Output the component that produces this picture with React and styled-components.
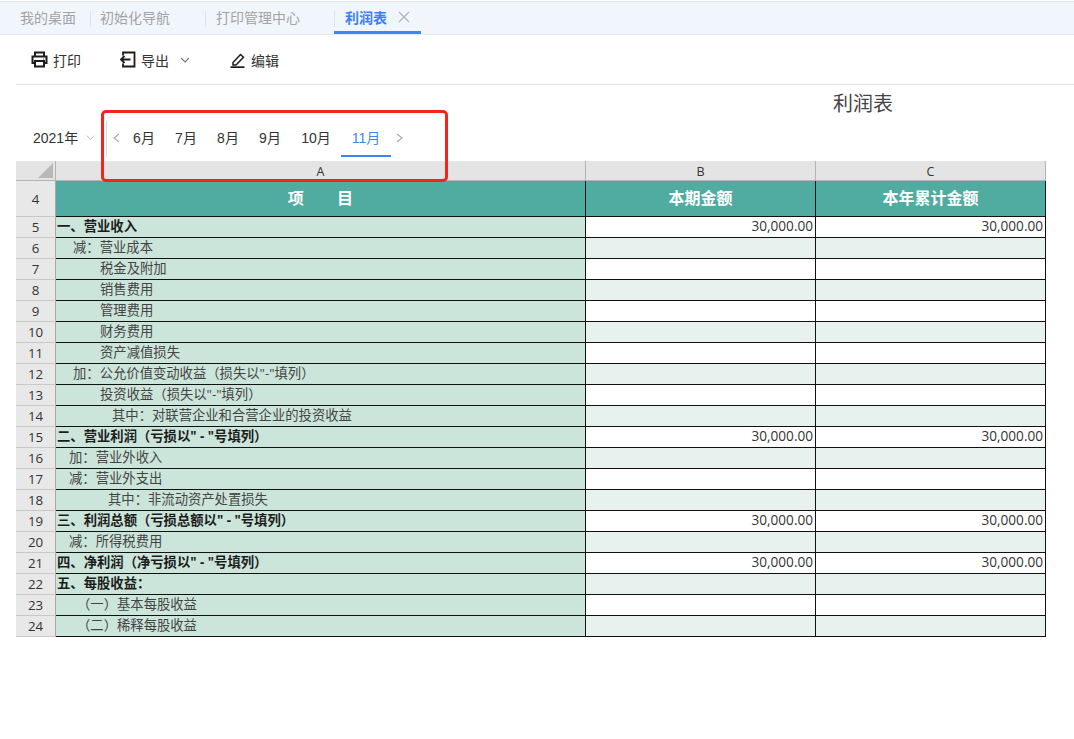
import React from 'react';
import styled, { createGlobalStyle } from 'styled-components';

const GlobalStyle = createGlobalStyle`
  html, body { margin: 0; padding: 0; background: #fff; }
  body { font-family: "Liberation Sans", "Noto Sans CJK SC", sans-serif; color: #333; }
`;

const Page = styled.div`
  position: relative;
  width: 1074px;
  height: 739px;
  overflow: hidden;
`;

const TabBar = styled.div`
  display: flex;
  align-items: stretch;
  height: 32px;
  margin-top: 1px;
  padding-left: 9px;
  background: #f1f6fd;
  border-top: 1px solid #e4e4e4;
  border-bottom: 1px solid #e3e8ef;
`;

const Tab = styled.div`
  position: relative;
  display: flex;
  align-items: center;
  gap: 11px;
  width: ${p => p.$w}px;
  padding-left: ${p => p.$pad}px;
  padding-top: 1px;
  box-sizing: border-box;
  font-size: 14px;
  font-weight: ${p => (p.$active ? 700 : 400)};
  color: ${p => (p.$active ? '#3d7ef5' : '#a3a3a3')};
  border-bottom: 3px solid ${p => (p.$active ? '#3f85f5' : 'transparent')};
  &::before {
    content: '';
    display: ${p => (p.$first ? 'none' : 'block')};
    position: absolute;
    left: 0;
    top: 9px;
    height: 16px;
    border-left: 1px solid #e0e3e8;
  }
`;

const Toolbar = styled.div`
  display: flex;
  align-items: center;
  height: 49px;
  margin-left: 16px;
  padding-left: 15px;
  border-bottom: 1px solid #e2e2e2;
`;

const ToolButton = styled.div`
  display: flex;
  align-items: center;
  gap: 5px;
  margin-right: ${p => p.$gap}px;
  font-size: 14px;
  color: #333;
`;

const ToolCaret = styled.span`
  display: flex;
  margin-left: 6px;
`;

const Title = styled.div`
  height: 36px;
  padding-left: 833px;
  font-size: 20px;
  line-height: 38px;
  color: #444;
`;

const FilterRow = styled.div`
  display: flex;
  align-items: stretch;
  height: 40px;
  padding-left: 33px;
`;

const Year = styled.div`
  display: flex;
  align-items: center;
  gap: 8px;
  width: 73px;
  height: 32px;
  font-size: 14px;
  color: #333;
`;

const Months = styled.div`
  display: flex;
  align-items: flex-start;
  height: 36px;
  border-left: 1px solid #d9d9d9;
  padding-left: 6px;
`;

const Month = styled.div`
  height: 36px;
  line-height: 34px;
  box-sizing: border-box;
  width: ${p => p.$w}px;
  text-align: center;
  font-size: 14px;
  color: ${p => (p.$active ? '#3f85f5' : '#333')};
  border-bottom: 2px solid ${p => (p.$active ? '#3f85f5' : 'transparent')};
`;

const Arrow = styled.div`
  display: flex;
  align-items: center;
  height: 34px;
  width: ${p => p.$w}px;
  padding-left: ${p => p.$pad}px;
  box-sizing: border-box;
`;

const Sheet = styled.div`
  display: grid;
  grid-template-columns: 40px 530px 230px 230px;
  grid-template-rows: 20px 36px repeat(20, 21px);
  margin-left: 16px;
  width: 1030px;
  font-family: "Open Sans", "Noto Sans CJK SC", sans-serif;
`;

const Corner = styled.div`
  position: relative;
  background: #e4e4e4;
  border-right: 1px solid #b4b4b4;
  border-bottom: 1px solid #b4b4b4;
  box-sizing: border-box;
  &::after {
    content: '';
    position: absolute;
    right: 2px;
    bottom: 2px;
    width: 0;
    height: 0;
    border-left: 15px solid transparent;
    border-bottom: 15px solid #b8b8b8;
  }
`;

const ColHead = styled.div`
  line-height: 21px;
  text-align: center;
  background: #e4e4e4;
  border-right: 1px solid #b4b4b4;
  border-bottom: 1px solid #b4b4b4;
  box-sizing: border-box;
  color: #333;
  font-size: 12.5px;
`;

const RowHead = styled.div`
  line-height: ${p => (p.$tall ? 36 : 21)}px;
  text-align: center;
  background: #e8e8e8;
  border-right: 1px solid #a9a9a9;
  border-bottom: 1px solid #c8c8c8;
  box-sizing: border-box;
  color: #333;
  font-size: 13.3px;
`;

const HeadCell = styled.div`
  line-height: 35px;
  text-align: center;
  background: #50aba0;
  color: #fff;
  font-size: 16px;
  font-weight: 700;
  white-space: pre;
  border-right: 1px solid #111;
  border-bottom: 1px solid #111;
  box-sizing: border-box;
`;

const LabelCell = styled.div`
  line-height: 18px;
  padding-left: ${p => p.$indent}px;
  background: #cce5da;
  border-right: 1px solid #111;
  border-bottom: 1px solid #111;
  box-sizing: border-box;
  font-size: 13.33px;
  font-weight: ${p => (p.$bold ? 700 : 400)};
  color: ${p => (p.$bold ? '#1c1c1c' : '#444')};
  white-space: pre;
  overflow: hidden;
`;

const ValueCell = styled.div`
  line-height: 18px;
  padding-right: 2px;
  text-align: right;
  background: ${p => (p.$shaded ? '#e7f1ee' : '#fff')};
  border-right: 1px solid #111;
  border-bottom: 1px solid #111;
  box-sizing: border-box;
  font-size: 13.6px;
  color: #333;
`;

const Highlight = styled.div`
  position: absolute;
  left: 101px;
  top: 110px;
  width: 347px;
  height: 72px;
  box-sizing: border-box;
  border: 3px solid #f5231b;
  border-radius: 5px;
  pointer-events: none;
`;

const Row = ({ no, label, indent, bold, value }) => (
  <>
    <RowHead>{no}</RowHead>
    <LabelCell $indent={indent} $bold={bold}>{label}</LabelCell>
    <ValueCell $shaded={no % 2 === 0}>{value}</ValueCell>
    <ValueCell $shaded={no % 2 === 0}>{value}</ValueCell>
  </>
);

const amount = '30,000.00';

const rows = [
  { no: 5, label: '一、营业收入', indent: 1, bold: true, value: amount },
  { no: 6, label: '减：营业成本', indent: 17 },
  { no: 7, label: '税金及附加', indent: 44 },
  { no: 8, label: '销售费用', indent: 44 },
  { no: 9, label: '管理费用', indent: 44 },
  { no: 10, label: '财务费用', indent: 44 },
  { no: 11, label: '资产减值损失', indent: 44 },
  { no: 12, label: '加：公允价值变动收益（损失以"-"填列）', indent: 17 },
  { no: 13, label: '投资收益（损失以"-"填列）', indent: 44 },
  { no: 14, label: '其中：对联营企业和合营企业的投资收益', indent: 56 },
  { no: 15, label: '二、营业利润（亏损以" - "号填列）', indent: 1, bold: true, value: amount },
  { no: 16, label: '加：营业外收入', indent: 13 },
  { no: 17, label: '减：营业外支出', indent: 13 },
  { no: 18, label: '其中：非流动资产处置损失', indent: 52 },
  { no: 19, label: '三、利润总额（亏损总额以" - "号填列）', indent: 1, bold: true, value: amount },
  { no: 20, label: '减：所得税费用', indent: 13 },
  { no: 21, label: '四、净利润（净亏损以" - "号填列）', indent: 1, bold: true, value: amount },
  { no: 22, label: '五、每股收益：', indent: 1, bold: true },
  { no: 23, label: '（一）基本每股收益', indent: 21 },
  { no: 24, label: '（二）稀释每股收益', indent: 21 },
];

const PrintIcon = () => (
  <svg width="17" height="17" viewBox="0 0 17 17" fill="none" stroke="#1c1c1c" strokeWidth="2">
    <path d="M4 5V1.5h9V5" />
    <path d="M4 12H1.5V5.5h14V12H13" />
    <path d="M4 10h9v5.5H4z" />
    <circle cx="12.5" cy="8" r=".6" fill="#1c1c1c" stroke="none" />
  </svg>
);

const ExportIcon = () => (
  <svg width="16" height="17" viewBox="0 0 16 17" fill="none" stroke="#1c1c1c" strokeWidth="1.8">
    <path d="M3 4.5V1.5h11.5v14H3v-3" />
    <path d="M10.5 8.5H1M4.5 5l-3.5 3.5 3.5 3.5" />
  </svg>
);

const EditIcon = () => (
  <svg width="16" height="16" viewBox="0 0 16 16" fill="none" stroke="#1c1c1c" strokeWidth="1.5">
    <path d="M3 10.5 10.5 2.5l3 2.8L6 13H3z" />
    <path d="M0.5 15.2h14" strokeWidth="1.8" />
  </svg>
);

const Chevron = ({ color = '#777', size = 10 }) => (
  <svg width={size} height={size} viewBox="0 0 10 10" fill="none" stroke={color} strokeWidth="1.1">
    <path d="M1 3l4 4 4-4" />
  </svg>
);

const Side = ({ flip }) => (
  <svg width="7" height="10" viewBox="0 0 7 10" fill="none" stroke="#a8a8a8" strokeWidth="1.1">
    <path d={flip ? 'M1 1l5 4-5 4' : 'M6 1L1 5l5 4'} />
  </svg>
);

const CloseIcon = () => (
  <svg width="12" height="12" viewBox="0 0 12 12" fill="none" stroke="#b5b5b5" strokeWidth="1.4">
    <path d="M1 1l10 10M11 1L1 11" />
  </svg>
);

export default function App() {
  return (
    <Page>
      <GlobalStyle />
      <TabBar>
        <Tab $first $w={81} $pad={11}>我的桌面</Tab>
        <Tab $w={115} $pad={10}>初始化导航</Tab>
        <Tab $w={129} $pad={11}>打印管理中心</Tab>
        <Tab $active $w={87} $pad={11}>利润表<CloseIcon /></Tab>
      </TabBar>
      <Toolbar>
        <ToolButton $gap={39}><PrintIcon />打印</ToolButton>
        <ToolButton $gap={40}>
          <ExportIcon />导出
          <ToolCaret><Chevron /></ToolCaret>
        </ToolButton>
        <ToolButton $gap={0}><EditIcon />编辑</ToolButton>
      </Toolbar>
      <Title>利润表</Title>
      <FilterRow>
        <Year>2021年<Chevron color="#bbb" size={9} /></Year>
        <Months>
          <Arrow $w={10}><Side /></Arrow>
          <Month $w={42}>6月</Month>
          <Month $w={42}>7月</Month>
          <Month $w={42}>8月</Month>
          <Month $w={42}>9月</Month>
          <Month $w={50}>10月</Month>
          <Month $w={50} $active>11月</Month>
          <Arrow $w={20} $pad={5}><Side flip /></Arrow>
        </Months>
      </FilterRow>
      <Sheet>
        <Corner />
        <ColHead>A</ColHead>
        <ColHead>B</ColHead>
        <ColHead>C</ColHead>
        <RowHead $tall>4</RowHead>
        <HeadCell>项        目</HeadCell>
        <HeadCell>本期金额</HeadCell>
        <HeadCell>本年累计金额</HeadCell>
        {rows.map(r => <Row key={r.no} {...r} />)}
      </Sheet>
      <Highlight />
    </Page>
  );
}
